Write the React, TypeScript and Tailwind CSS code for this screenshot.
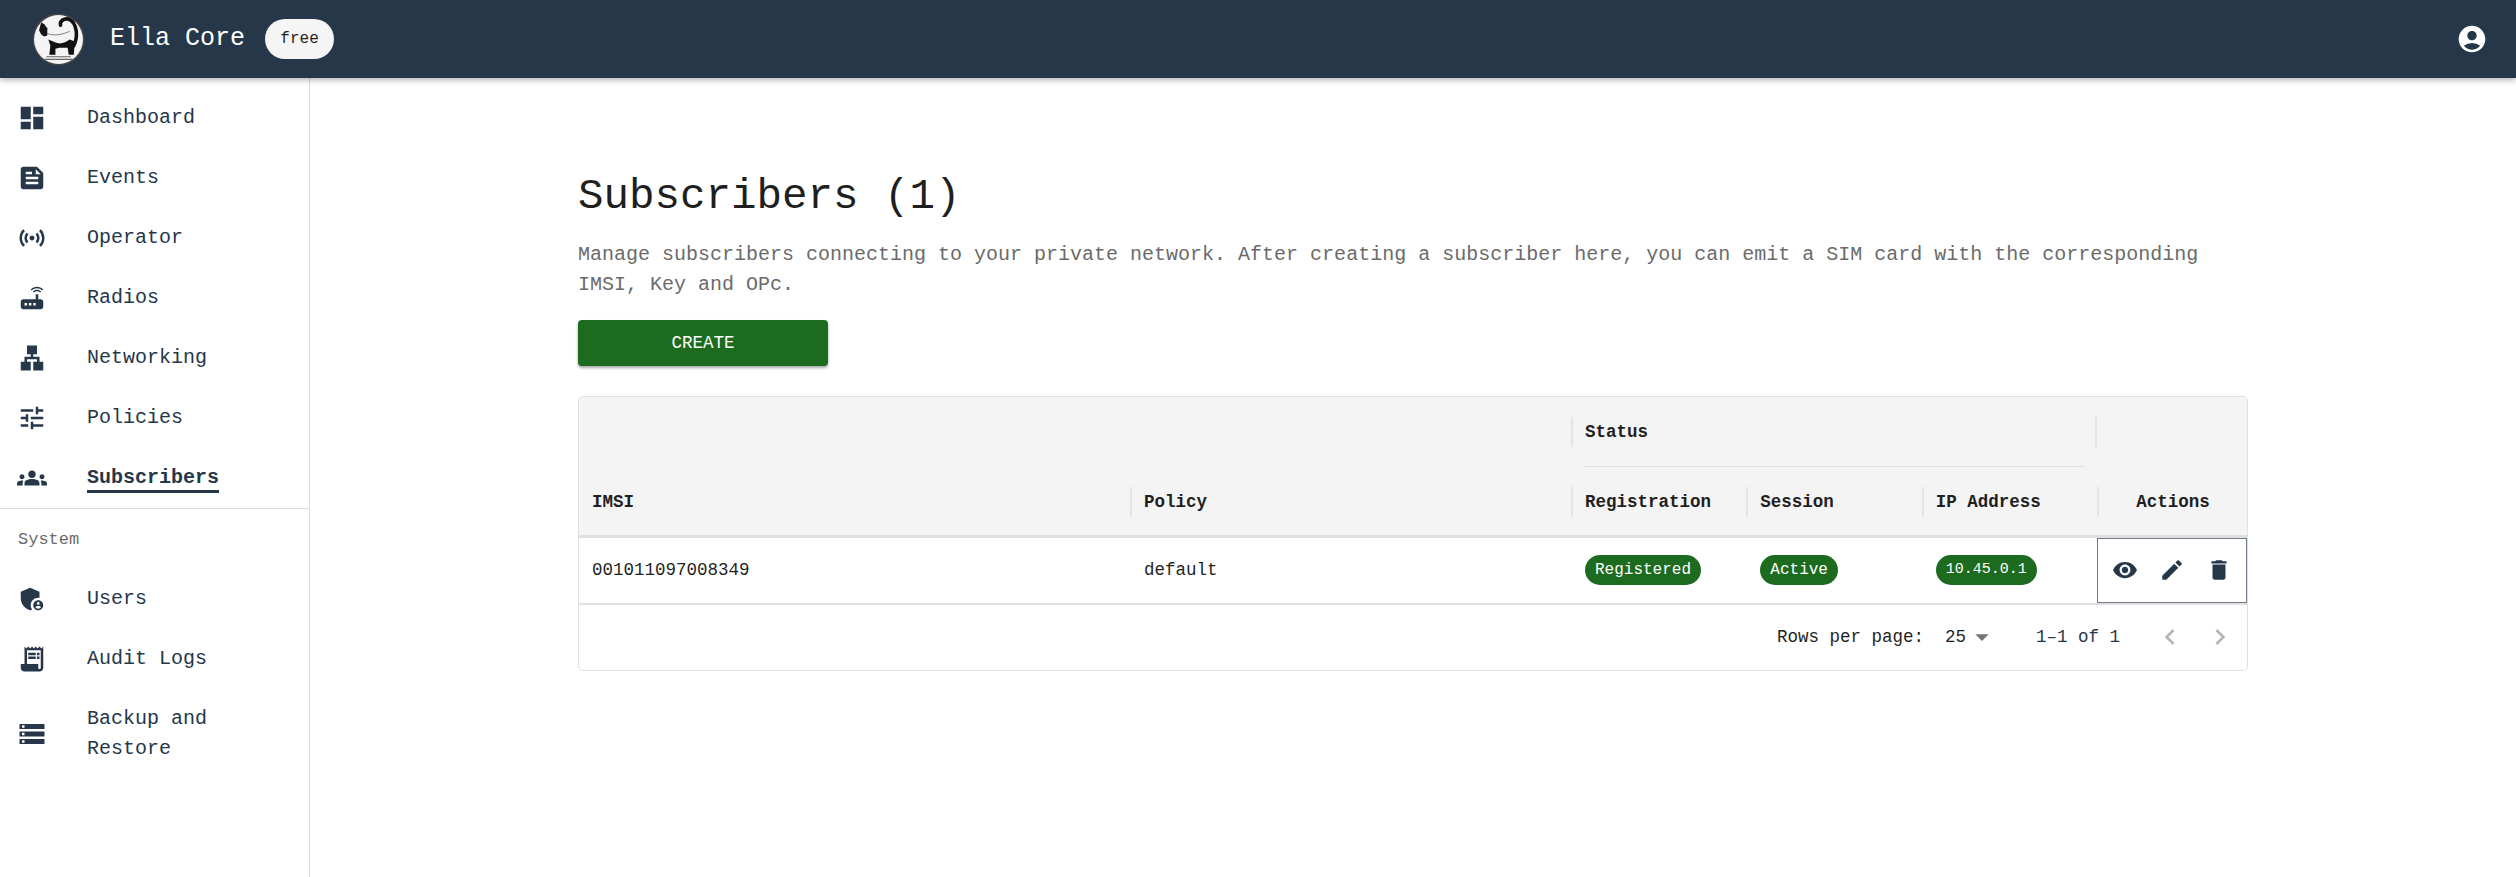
import {
  MdAccountCircle,
  MdAdminPanelSettings,
  MdArrowDropDown,
  MdChevronLeft,
  MdChevronRight,
  MdDashboard,
  MdDelete,
  MdEdit,
  MdFeed,
  MdGroups,
  MdLan,
  MdReceiptLong,
  MdRouter,
  MdSensors,
  MdStorage,
  MdTune,
  MdVisibility,
} from "react-icons/md";

const mono = "font-['Liberation_Mono','DejaVu_Sans_Mono',monospace]";

const mainNav = [
  { label: "Dashboard", icon: MdDashboard },
  { label: "Events", icon: MdFeed },
  { label: "Operator", icon: MdSensors },
  { label: "Radios", icon: MdRouter },
  { label: "Networking", icon: MdLan },
  { label: "Policies", icon: MdTune },
  { label: "Subscribers", icon: MdGroups, active: true },
];

const systemNav = [
  { label: "Users", icon: MdAdminPanelSettings },
  { label: "Audit Logs", icon: MdReceiptLong },
  { label: "Backup and Restore", icon: MdStorage },
];

function Logo() {
  return (
    <svg viewBox="0 0 52 52" className="w-[53px] h-[53px]">
      <circle cx="26" cy="26" r="25.5" fill="#444" />
      <circle cx="26" cy="26" r="24" fill="#f4f4f4" />
      {/* tail */}
      <path d="M41 32C45 24 45 10 36 6C31 5 27 8 28 12" fill="none" stroke="#111" strokeWidth="3.500" strokeLinecap="round" />
      {/* head */}
      <path d="M7 17L9 9L12 11L15 15L15 22L12 23L9 21z" fill="#161616" />
      {/* back */}
      <path d="M15 20C22 23 30 21 37 18" fill="none" stroke="#666" strokeWidth="0.800" />
      {/* belly and legs */}
      <path d="M16 26L23 29C28 31 33 29 37 26L42 28L41 41L36 41L35 34L27 34L23 35L23 41L17 41L18 32z" fill="#111" />
      <path d="M12 45H40V46H12zM14 42.500H38V43.500H14z" fill="#666" />
    </svg>
  );
}

function NavItem({ label, icon: Icon, active }: { label: string; icon: typeof MdDashboard; active?: boolean }) {
  return (
    <div className="flex items-center pl-[17px] pr-[20px] py-[15px]">
      <div className="w-[70px] h-[30px] shrink-0 flex items-center">
        <Icon className="w-[30px] h-[30px] text-[#26374a]" />
      </div>
      <span
        className={`text-[20px] leading-[30px] text-[#26374a] ${active ? "font-bold border-b-[3px] border-[#26374a] h-[30px]" : ""}`}
      >
        {label}
      </span>
    </div>
  );
}

function Pill({ children, small }: { children: string; small?: boolean }) {
  return (
    <span className={`inline-flex items-center h-[30px] px-[10px] rounded-full bg-[#1c6b1f] text-white ${small ? "text-[15px]" : "text-[16px]"}`}>
      {children}
    </span>
  );
}

function HeadLabel({ children }: { children?: string }) {
  return <div className="mt-[2px] h-[30px] border-l-2 border-[#e4e4e4] pl-[12px] leading-[30px]">{children}</div>;
}

export default function App() {
  return (
    <div className={`h-[877px] flex flex-col bg-white overflow-hidden ${mono}`}>
      <header className="h-[78px] shrink-0 bg-[#26374a] flex items-center pl-[32px] pr-[28px] shadow-[0_2px_6px_rgba(0,0,0,0.3)] z-10 relative">
        <Logo />
        <span className="ml-[25px] text-[25px] text-white">Ella Core</span>
        <span className="ml-[20px] h-[40px] w-[69px] rounded-full bg-[#f5f5f5] text-[#1f1f1f] text-[16px] flex items-center justify-center">
          free
        </span>
        <MdAccountCircle className="ml-auto w-[32px] h-[32px] text-white" />
      </header>

      <div className="flex flex-1 min-h-0">
        <aside className="w-[310px] shrink-0 border-r border-[#dcdcdc] pt-[10px]">
          {mainNav.map((item) => (
            <NavItem key={item.label} {...item} />
          ))}
          <div className="border-t border-[#dcdcdc] pt-[17px] pl-[18px] text-[17px] leading-[28px] text-[#6b6b6b]">
            System
          </div>
          <div className="pt-[15px]">
            {systemNav.map((item) => (
              <NavItem key={item.label} {...item} />
            ))}
          </div>
        </aside>

        <main className="flex-1 pl-[268px] pr-[268px] pt-[88px] min-w-0">
          <h1 className="text-[42.500px] leading-[62px] text-[#1f1f1f]">Subscribers (1)</h1>
          <p className="mt-[12px] text-[20px] leading-[30px] text-[#6b6b6b]">
            Manage subscribers connecting to your private network. After creating a subscriber here, you can emit a SIM card with the corresponding IMSI, Key and OPc.
          </p>
          <button className="mt-[20px] block w-[250px] h-[46px] rounded-[4px] bg-[#1c6b1f] text-white text-[17.500px] shadow-[0_2px_3px_rgba(0,0,0,0.35)]">
            CREATE
          </button>

          <div className="mt-[30px] border border-[#e0e0e0] rounded-[5px] overflow-hidden text-[17.500px] text-[#1f1f1f]">
            <table className="w-full table-fixed border-collapse">
              <thead className="bg-[#f4f4f4] font-bold">
                <tr className="h-[70px]">
                  <th className="w-[551px]" />
                  <th className="w-[441px]" />
                  <th colSpan={3} className="text-left align-top p-0">
                    <div className="pt-[20px]">
                      <div className="h-[30px] border-l-2 border-r-2 border-[#e4e4e4] pl-[12px] leading-[30px]">Status</div>
                    </div>
                    <div className="mt-[19px] h-[1px] ml-[13px] mr-[12px] bg-[#e0e0e0]" />
                  </th>
                  <th className="w-[150px]" />
                </tr>
                <tr className="h-[69px] border-b-[3px] border-[#e0e0e0]">
                  <th className="text-left pl-[13px] pt-[2px]">IMSI</th>
                  <th className="text-left">
                    <HeadLabel>Policy</HeadLabel>
                  </th>
                  <th className="w-[175px] text-left">
                    <HeadLabel>Registration</HeadLabel>
                  </th>
                  <th className="w-[175px] text-left">
                    <HeadLabel>Session</HeadLabel>
                  </th>
                  <th className="w-[175px] text-left">
                    <HeadLabel>IP Address</HeadLabel>
                  </th>
                  <th className="text-center">
                    <div className="mt-[2px] h-[30px] border-l-2 border-[#e4e4e4] leading-[30px]">Actions</div>
                  </th>
                </tr>
              </thead>
              <tbody>
                <tr className="h-[65px] border-b-2 border-[#e0e0e0]">
                  <td className="pl-[13px]">001011097008349</td>
                  <td className="pl-[14px]">default</td>
                  <td className="pl-[14px]">
                    <Pill>Registered</Pill>
                  </td>
                  <td className="pl-[14px]">
                    <Pill>Active</Pill>
                  </td>
                  <td className="pl-[14px]">
                    <Pill small>10.45.0.1</Pill>
                  </td>
                  <td className="p-0">
                    <div className="h-[65px] border border-[#6f7b88] flex items-center justify-between px-[14px] text-[#26374a]">
                      <MdVisibility className="w-[26px] h-[26px]" />
                      <MdEdit className="w-[26px] h-[26px]" />
                      <MdDelete className="w-[26px] h-[26px]" />
                    </div>
                  </td>
                </tr>
              </tbody>
            </table>
            <div className="h-[65px] flex items-center justify-end text-[17.500px] text-[#1f1f1f]">
              <span>Rows per page:</span>
              <span className="ml-[21px]">25</span>
              <MdArrowDropDown className="w-[32px] h-[32px] text-[#757575]" />
              <span className="ml-[38px] text-[#26374a]">1–1 of 1</span>
              <div className="ml-[34px] mr-[11px] flex gap-[18px] text-[#b5b5b5]">
                <MdChevronLeft className="w-[32px] h-[32px]" />
                <MdChevronRight className="w-[32px] h-[32px]" />
              </div>
            </div>
          </div>
        </main>
      </div>
    </div>
  );
}
